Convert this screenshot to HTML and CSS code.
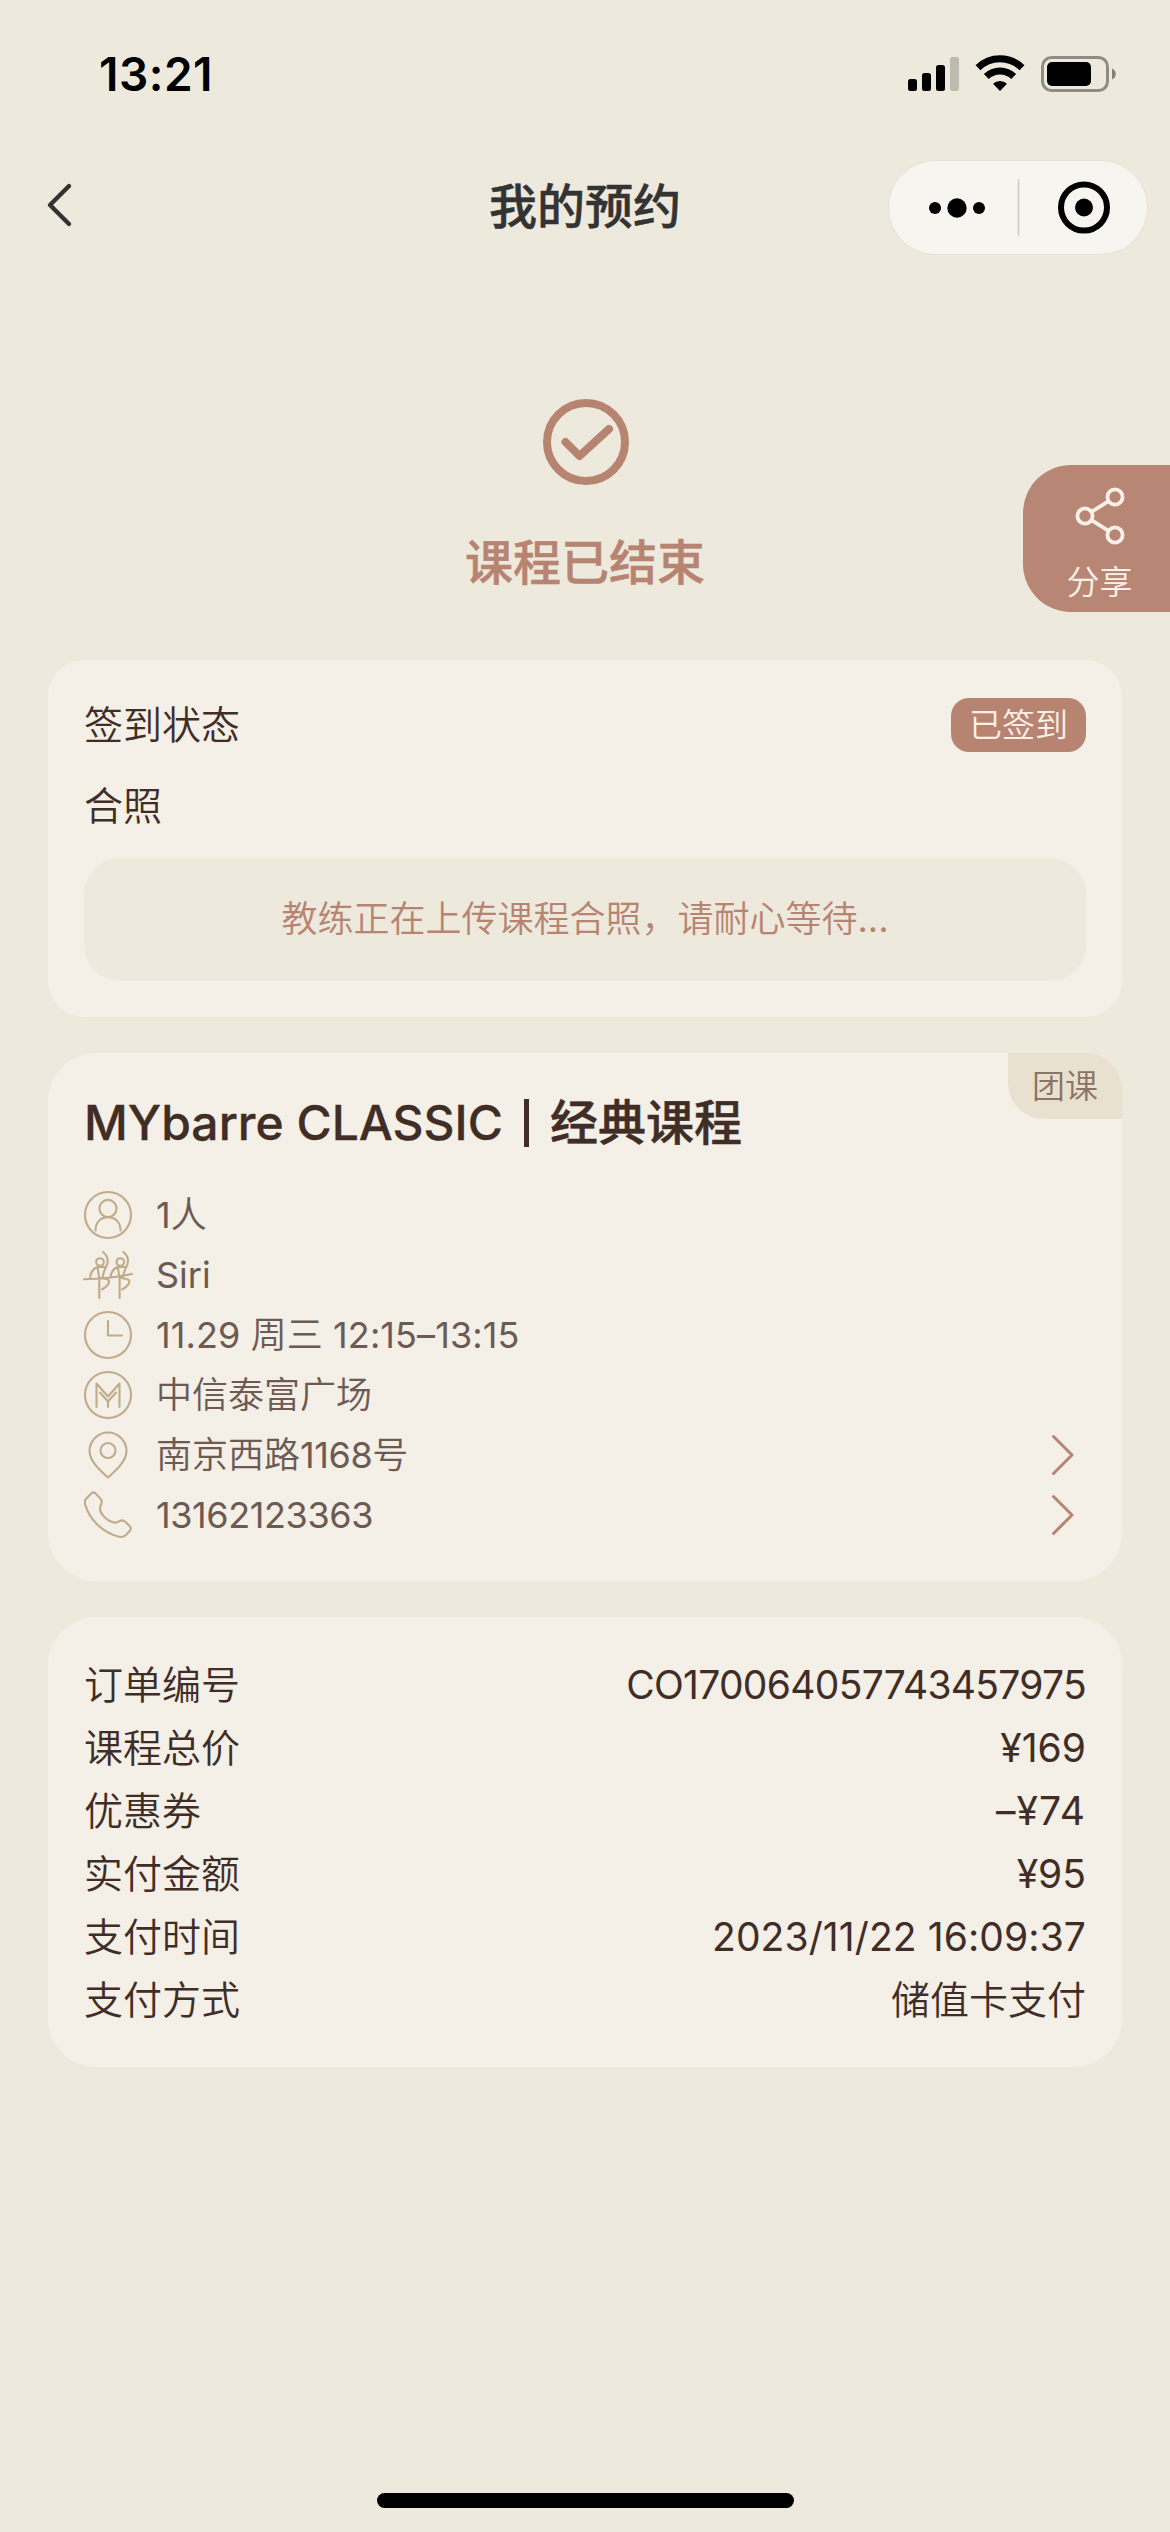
FILE: index.html
```html
<!DOCTYPE html>
<html lang="zh-CN">
<head>
<meta charset="utf-8">
<title>我的预约</title>
<link rel="stylesheet" href="styles.css">
</head>
<body>
<div class="screen">
  <header class="statusbar">
    <span class="clock">13:21</span>
    <div class="indicators">
      <svg class="signal" width="51" height="34" viewBox="0 0 51 34">
        <rect x="0" y="22" width="9" height="12" rx="2.5"/>
        <rect x="14" y="16" width="9" height="18" rx="2.5"/>
        <rect x="28" y="8" width="9" height="26" rx="2.5"/>
        <rect x="42" y="0" width="9" height="34" rx="2.5" opacity=".2"/>
      </svg>
      <svg class="wifi" width="50" height="36" viewBox="0 0 50 36">
        <path d="M3 12.800a31.500 31.500 0 0 1 44 0" fill="none" stroke="#000" stroke-width="7"/>
        <path d="M11.300 21.600a19.500 19.500 0 0 1 27.400 0" fill="none" stroke="#000" stroke-width="7"/>
        <path d="M25 36l-7-7.200a10 10 0 0 1 14 0z"/>
      </svg>
      <svg class="battery" width="76" height="36" viewBox="0 0 76 36">
        <rect x="1.5" y="1.5" width="65" height="33" rx="9" fill="none" stroke="#000" stroke-width="3" opacity=".4"/>
        <rect x="6" y="6" width="44" height="24" rx="5"/>
        <path d="M71 12.500c5 2 5 9 0 11z" opacity=".45"/>
      </svg>
    </div>
  </header>

  <nav class="navbar">
    <svg class="back" width="28" height="46" viewBox="0 0 28 46">
      <path d="M23 4L4 23l19 19" fill="none" stroke="#333" stroke-width="4.400" stroke-linecap="round" stroke-linejoin="round"/>
    </svg>
    <h1 class="nav-title">我的预约</h1>
    <div class="capsule">
      <svg width="260" height="95" viewBox="0 0 260 95">
        <circle cx="47" cy="48" r="6"/><circle cx="69" cy="48" r="9.700"/><circle cx="91" cy="48" r="6"/>
        <path d="M130.500 19.500v56" stroke="#c9c9c5" stroke-width="1.500"/>
        <circle cx="196" cy="47.500" r="23" fill="none" stroke="#000" stroke-width="6"/>
        <circle cx="196" cy="47.500" r="9"/>
      </svg>
    </div>
  </nav>

  <section class="result">
    <svg width="88" height="88" viewBox="0 0 88 88" fill="none" stroke="#b88472" stroke-width="8">
      <circle cx="44" cy="44" r="39"/>
      <path d="M23.500 44l14 14L67 31" stroke-linecap="round" stroke-linejoin="round"/>
    </svg>
    <p class="result-text">课程已结束</p>
  </section>

  <button class="share">
    <svg width="52" height="60" viewBox="0 0 52 60" fill="none" stroke="#fbf0e7" stroke-width="3.800">
      <circle cx="41" cy="11" r="7.600"/><circle cx="11" cy="30" r="7.600"/><circle cx="41" cy="49" r="7.600"/>
      <path d="M17.400 25.900L34.600 15.100M17.400 34.100l17.200 10.800"/>
    </svg>
    <span>分享</span>
  </button>

  <main class="cards">
    <section class="card checkin">
      <div class="line"><span>签到状态</span><span class="badge">已签到</span></div>
      <div class="line"><span>合照</span></div>
      <div class="photo">教练正在上传课程合照，请耐心等待<span class="num">...</span></div>
    </section>

    <section class="card course">
      <span class="tag">团课</span>
      <h2 class="course-title"><span class="latin">MYbarre CLASSIC</span><i class="bar"></i>经典课程</h2>
      <ul class="facts">
        <li>
          <svg class="ic" viewBox="0 0 48 48"><circle cx="24" cy="24" r="23"/><circle cx="24" cy="17.500" r="8.600"/><path d="M11.500 39.500C11.500 31 17 26.100 24 26.100S36.500 31 36.500 39.500"/></svg>
          <span><span class="num">1</span>人</span>
        </li>
        <li>
          <svg class="ic" viewBox="0 0 48 48"><path d="M0 28.300C14 28 34 26 48 23"/><g id="dancer"><circle cx="16" cy="11" r="3.800"/><path d="M19 1c5 4 6 9 3 15-1.500 3-3 6-3 9.500M6 26c1-5 4-9 8-10h7M13.500 16.500L15.300 27V47M15 26c3 2 6 1 9.500 3 2 3-2 7-6.500 9.500"/></g><use href="#dancer" x="20.300"/></svg>
          <span class="num">Siri</span>
        </li>
        <li>
          <svg class="ic" viewBox="0 0 48 48"><circle cx="24" cy="24" r="23"/><path d="M24 10v14.500h14"/></svg>
          <span class="when"><span class="num">11.29 </span>周三<span class="num"> 12:15–13:15</span></span>
        </li>
        <li>
          <svg class="ic" viewBox="0 0 48 48"><circle cx="24" cy="24" r="23"/><path d="M12.500 36V12.500L24 25.500 35.500 12.500V36M16 21.500L24 30.500l8-9M24 30.500V36"/></svg>
          <span>中信泰富广场</span>
        </li>
        <li>
          <svg class="ic" viewBox="0 0 48 48"><path d="M24 46.500C15 38.500 5.500 29.500 5.500 20a18.500 18.500 0 0 1 37 0C42.500 29.500 33 38.500 24 46.500z"/><circle cx="24" cy="19.500" r="7.500"/></svg>
          <span>南京西路<span class="num phone">1168</span>号</span>
          <svg class="go" viewBox="0 0 24 42"><path d="M2.500 2.500L21 21 2.500 39.500"/></svg>
        </li>
        <li>
          <svg class="ic" viewBox="0 0 48 48"><path d="M1.500 8.500L7.500 2.200q2-1.700 4 .2l5 5.300q2.200 2.500.5 6c-2 3.500-1.500 6 1 9.500 3.500 4.800 8.500 8 13 8.500 2.500.2 4-2 6.500-2.300 1.500 0 3 .6 4 1.600l4.500 4.500q1.500 2 0 4l-4 4.500c-2 2-5 2.300-8 1.500C18 41 5 28 1.200 13.500Q.5 10.500 1.500 8.500z"/></svg>
          <span class="num phone">13162123363</span>
          <svg class="go" viewBox="0 0 24 42"><path d="M2.500 2.500L21 21 2.500 39.500"/></svg>
        </li>
      </ul>
    </section>

    <section class="card order">
      <dl>
        <div class="pair"><dt>订单编号</dt><dd class="num serial">CO170064057743457975</dd></div>
        <div class="pair"><dt>课程总价</dt><dd class="num">¥169</dd></div>
        <div class="pair"><dt>优惠券</dt><dd class="num discount">–¥74</dd></div>
        <div class="pair"><dt>实付金额</dt><dd class="num">¥95</dd></div>
        <div class="pair"><dt>支付时间</dt><dd class="num paid-at">2023/11/22 16:09:37</dd></div>
        <div class="pair"><dt>支付方式</dt><dd>储值卡支付</dd></div>
      </dl>
    </section>
  </main>
  <div class="home"></div>
</div>
</body>
</html>
```
FILE: styles.css
```css
* { box-sizing: border-box; margin: 0; padding: 0; }

body {
  background: #ede9dc;
  font-family: Inter, "Noto Sans CJK SC", sans-serif;
  font-weight: 350;
  color: #3f2d26;
}

.screen {
  position: relative;
  display: flex;
  flex-direction: column;
  width: 1170px;
  height: 2532px;
  overflow: hidden;
}

/* digits and latin text sit one step heavier than the chinese text */
.num { font-weight: 400; }

/* system status bar */
.statusbar {
  display: flex;
  justify-content: space-between;
  height: 141px;
  padding: 55px 53px 0 99px;
}
.clock {
  font-size: 46px;
  line-height: 39px;
  font-weight: 600;
  letter-spacing: .5px;
  color: #000;
}
.indicators { display: flex; }
.signal { margin-top: 2px; }
.wifi { margin-left: 16px; }
.battery { margin: 1px 0 0 16px; }

/* navigation bar */
.navbar {
  display: grid;
  grid-template-columns: 260px 1fr 260px;
  align-items: center;
  height: 132px;
  padding: 0 22px;
}
.back { margin: -4px 0 0 24px; }
.nav-title {
  font-size: 48px;
  line-height: 60px;
  font-weight: 500;
  -webkit-text-stroke: .5px currentColor;
  text-align: center;
  color: #333;
}
.capsule {
  height: 95px;
  border-radius: 48px;
  background: #f7f5ef;
  box-shadow: inset 0 0 0 1px #e4e0d5;
}

/* booking result */
.result {
  display: flex;
  flex-direction: column;
  align-items: center;
  height: 387px;
  padding: 125px 0 0;
}
.result svg { margin-left: 2px; }
.result-text {
  margin-top: 47px;
  font-size: 48px;
  line-height: 60px;
  font-weight: 500;
  -webkit-text-stroke: .5px currentColor;
  color: #b88472;
}

.share {
  position: absolute;
  top: 465px;
  right: 0;
  display: flex;
  flex-direction: column;
  align-items: center;
  width: 147px;
  height: 147px;
  padding: 21px 0 0 6px;
  border: 0;
  border-radius: 48px 0 0 48px;
  background: #b88674;
  color: #fbf0e7;
  font: 350 33px/40px Inter, "Noto Sans CJK SC", sans-serif;
}
.share span { margin-top: 16px; }

/* cards */
.cards {
  display: flex;
  flex-direction: column;
  gap: 36px;
  padding: 0 48px;
}
.card {
  position: relative;
  padding: 0 36px;
  border-radius: 48px;
  background: #f4efe7;
}

.checkin { height: 357px; padding-top: 24px; border-radius: 36px; font-size: 39px; }
.line {
  display: flex;
  align-items: center;
  justify-content: space-between;
  height: 81px;
  line-height: 81px;
}
.badge {
  height: 54px;
  padding: 0 18px;
  border-radius: 18px;
  background: #b88472;
  color: #fbf0e7;
  font-size: 33px;
  line-height: 54px;
}
.photo {
  height: 123px;
  margin-top: 12px;
  border-radius: 36px;
  background: #ede9dc;
  color: #b88472;
  font-size: 36px;
  line-height: 123px;
  text-align: center;
}

.course { height: 528px; padding-top: 40px; }
.tag {
  position: absolute;
  top: 0;
  right: 0;
  width: 114px;
  height: 66px;
  border-radius: 0 36px 0 36px;
  background: #e8e1cf;
  color: #8b7365;
  font-size: 33px;
  line-height: 66px;
  text-align: center;
}
.course-title {
  display: flex;
  align-items: center;
  height: 60px;
  font-size: 48px;
  line-height: 60px;
  font-weight: 500;
  -webkit-text-stroke: .5px currentColor;
}
.latin { -webkit-text-stroke-width: .3px; }
.bar { width: 5px; height: 48px; margin: 0 21px; background: currentColor; }
.facts { margin-top: 32px; list-style: none; }
.facts li {
  display: flex;
  align-items: center;
  height: 60px;
  font-size: 36px;
  line-height: 60px;
  color: #6c5a53;
}
.when { letter-spacing: .1px; white-space: pre; }
.phone { letter-spacing: -.4px; }
.ic {
  width: 48px;
  height: 48px;
  margin-right: 24px;
  overflow: visible;
  fill: none;
  stroke: #c0ab8b;
  stroke-width: 2.1;
  stroke-linecap: round;
  stroke-linejoin: round;
}
.go {
  width: 24px;
  height: 42px;
  margin: 0 11px 0 auto;
  fill: none;
  stroke: #b88472;
  stroke-width: 3;
  stroke-linecap: round;
  stroke-linejoin: round;
}

.order { height: 450px; padding-top: 36px; font-size: 39px; }
.pair {
  display: flex;
  justify-content: space-between;
  height: 63px;
  line-height: 63px;
}
.serial { letter-spacing: -.7px; }
.discount { letter-spacing: 1px; }
.paid-at { letter-spacing: .1px; }

.home {
  width: 417px;
  height: 15px;
  margin: auto auto 24px 377px;
  border-radius: 8px;
  background: #000;
}
```
